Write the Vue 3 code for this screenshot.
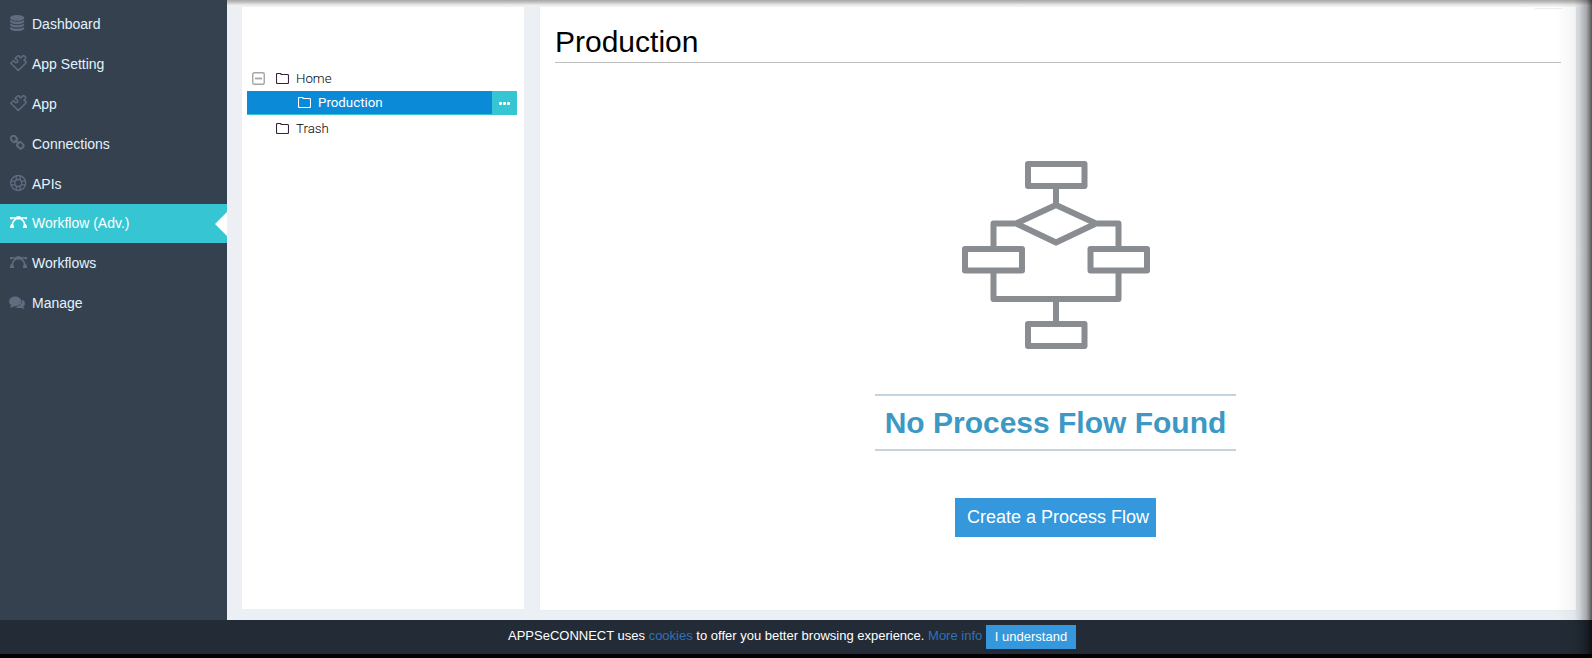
<script setup>
const items = [
  { label: 'Dashboard', icon: 'db' },
  { label: 'App Setting', icon: 'puzzle' },
  { label: 'App', icon: 'puzzle' },
  { label: 'Connections', icon: 'link' },
  { label: 'APIs', icon: 'ring', short: true },
  { label: 'Workflow (Adv.)', icon: 'vector', active: true },
  { label: 'Workflows', icon: 'vector' },
  { label: 'Manage', icon: 'chat' },
]
const folder = 'M.5 9.500V1.5Q.5.5 1.5.5H4.2Q5.2.5 5.2 1.500H11.500Q12.5 1.500 12.5 2.500V9.500Q12.5 10.500 11.5 10.500H1.5Q.5 10.500.5 9.500Z'
</script>

<template>
  <div class="page">
    <div class="body">
      <nav class="side">
        <a v-for="i in items" :key="i.label" class="item" :class="{ active: i.active, short: i.short }">
          <svg v-if="i.icon === 'db'" class="ico" width="18" height="18" viewBox="0 0 18 18">
            <ellipse cx="7.1" cy="2.9" rx="7.1" ry="2.9" fill="currentColor" />
            <g fill="currentColor">
              <path d="M0 5Q2.500 6.800 7.1 6.800T14.2 5V6.800Q12.800 9.200 7.1 9.200T0 6.800Z" />
              <path d="M0 8.500Q2.500 10.300 7.1 10.300T14.2 8.500V10.100Q12.800 12.600 7.1 12.600T0 10.100Z" />
              <path d="M0 11.900Q2.500 13.700 7.1 13.700T14.2 11.900V13.500Q12.800 16.100 7.1 16.100T0 13.500Z" />
            </g>
          </svg>
          <svg v-else-if="i.icon === 'puzzle'" class="ico" width="18" height="18" viewBox="0 0 18 18" fill="none" stroke="currentColor" stroke-width="1.4" stroke-linejoin="round">
            <path d="M8.300 15.500.8 8.200 3 6Q3.700 5.500 4.200 6.400Q5.200 8.400 7 7.400Q8.600 6 7 4.700Q4.800 4.200 5.200 3.200L7.400 1.200Q8.600.2 9.500 1.200Q9.600 3.300 11 2.600Q12.300.3 14.200.8Q16.400 1.900 15.300 3.900Q13.300 5 14.600 6Q17 6.600 15.700 8.200Z" />
          </svg>
          <svg v-else-if="i.icon === 'link'" class="ico" width="18" height="18" viewBox="0 0 18 18" fill="none" stroke="currentColor" stroke-width="1.9">
            <rect x="-3.1" y="-2.600" width="6.2" height="5.2" rx="1.9" transform="translate(3.900 3.900) rotate(45)" />
            <rect x="-3.1" y="-2.600" width="6.2" height="5.2" rx="1.9" transform="translate(10.300 10.300) rotate(45)" />
            <path d="M4.900 4.900 9 9" />
          </svg>
          <svg v-else-if="i.icon === 'ring'" class="ico" width="18" height="18" viewBox="0 0 18 18" fill="none" stroke="currentColor" stroke-width="1.3">
            <circle cx="8.2" cy="8" r="7.500" /><circle cx="8.2" cy="8" r="3.500" />
            <path d="M6.300.8V5M10.100.8V5M6.300 11V15.200M10.100 11V15.200M1 6.1H5.200M1 9.900H5.200M11.200 6.1H15.400M11.200 9.900H15.400" />
          </svg>
          <svg v-else-if="i.icon === 'vector'" class="ico vec" width="18" height="18" viewBox="0 0 18 18">
            <path d="M.5 2.1H16.500M2.200 9.500Q2.600 4.500 6.500 2.700M14.800 9.500Q14.400 4.500 10.500 2.700" fill="none" stroke="currentColor" stroke-width="1.500" />
            <path d="M6.500.2H10.500V3.500H6.500ZM0 1H2V3.300H0ZM15 1H17V3.300H15ZM1 8.200H3.300L4.200 12H0V10.500ZM13.700 8.200H16L17 10.500V12H12.800Z" fill="currentColor" />
          </svg>
          <svg v-else class="ico chat" width="18" height="18" viewBox="0 0 18 18" fill="currentColor">
            <ellipse cx="6.2" cy="5.400" rx="6.2" ry="4.900" />
            <path d="M2.400 8.500 1 11.600Q4 11.500 5.600 9.700Z" />
            <path d="M13.200 3.800Q16.200 5.400 15.900 8Q15.700 9.700 14.300 10.700Q14.500 12 15.900 12.800Q13.500 13 12.100 11.700Q8.400 12.400 5.900 10.900Q13 10.600 13.200 3.800Z" />
          </svg>
          <span>{{ i.label }}</span>
        </a>
      </nav>

      <main class="work">
        <section class="tree">
          <div class="row">
            <svg class="toggle" width="13" height="13" viewBox="0 0 13 13"><rect x=".75" y=".75" width="11.5" height="11.5" rx="1.5" fill="none" stroke="#a5a5a5" stroke-width="1.4" /><path d="M3 6.500H10" stroke="#a5a5a5" stroke-width="1.8" /></svg>
            <svg class="folder" width="13" height="11" viewBox="0 0 13 11"><path :d="folder" /></svg>
            <span class="light">Home</span>
          </div>
          <div class="row selected">
            <svg class="folder" width="13" height="11" viewBox="0 0 13 11"><path :d="folder" /></svg>
            <span>Production</span>
            <span class="more"><i /><i /><i /></span>
          </div>
          <div class="row trash">
            <svg class="folder" width="13" height="11" viewBox="0 0 13 11"><path :d="folder" /></svg>
            <span class="light">Trash</span>
          </div>
        </section>

        <section class="panel">
          <h1>Production</h1>
          <div class="empty">
            <svg class="flow" width="188" height="188" viewBox="0 0 188 188" fill="none" stroke="#898c90" stroke-width="6" stroke-linejoin="round">
              <rect x="66" y="3" width="56.5" height="22" />
              <rect x="3" y="88" width="57" height="21.5" />
              <rect x="128.500" y="88" width="56.5" height="21.5" />
              <rect x="66" y="163" width="56.500" height="22" />
              <path d="M94 25V44M54 62.500 94 44 134 62.500 94 81.500ZM54 62.500H31.500V88M134 62.500H156.500V88M31.500 109.500V138H156.500V109.500M94 138V163" />
            </svg>
            <h2>No Process Flow Found</h2>
            <button class="create">Create a Process Flow</button>
          </div>
        </section>
        <div class="shade-top"></div>
        <div class="hairline"></div>
      </main>
    </div>

    <footer class="cookie">
      <span class="msg">APPSeCONNECT uses <a>cookies</a> to offer you better browsing experience. <a>More info</a></span>
      <button class="ok">I understand</button>
    </footer>
    <div class="shade-right"></div>
  </div>
</template>

<style>
body { margin: 0; overflow: hidden; }
</style>

<style scoped>
* { box-sizing: border-box; }
.page { position: relative; width: 1592px; height: 658px; display: flex; flex-direction: column; overflow: hidden; background: #000; font-family: "Liberation Sans", Arial, sans-serif; }
.body { display: flex; height: 620px; }
.side { width: 227px; background: #364150; padding-top: 5px; flex: none; }
.item { position: relative; display: flex; height: 40px; padding: 9px 0 0 10px; color: #e0f4ff; font-size: 14px; line-height: 20px; white-space: nowrap; }
.item.short { height: 39px; }
.item span { width: max-content; }
.ico { flex: none; margin: 1px 4px 0 0; color: #606c80; }
.vec { margin-top: 3px; }
.chat { margin: 3px 5px 0 -1px; }
.active { height: 39px; margin-bottom: 1px; background: #36c6d3; color: #fff; }
.active .ico { color: #fff; }
.active::after { content: ""; position: absolute; right: 0; top: 8px; border: 12px solid transparent; border-left-width: 0; border-right-color: #fff; }
.work { position: relative; flex: 1; display: flex; gap: 15px; padding: 7px 15px 9px 15px; background: #ecf0f4; }
.tree { width: 282px; height: 602px; background: #fff; padding: 59px 7px 0 5px; font-family: Roboto, "Noto Sans", sans-serif; font-size: 13.3px; color: #222; }
.row { height: 24px; display: flex; align-items: center; padding-left: 5px; }
.toggle { margin-right: 11px; }
.folder { margin-right: 7px; fill: none; stroke: #33233c; stroke-width: 1.1; }
.selected { height: 24px; margin-top: 1px; padding-left: 51px; background: #0b8ad8; border-bottom: 1px solid #36c6d3; color: #fff; }
.selected .folder { stroke: #fff; }
.more { width: 25px; height: 24px; margin: 0 0 -1px auto; background: #36c6d3; display: flex; gap: 1px; align-items: center; justify-content: center; padding-right: 1px; }
.more i { width: 3px; height: 3px; border-radius: 1px; background: #fff; }
.trash { padding-left: 29px; margin-top: 1px; }
.light { font-weight: 300; color: #000; }
.panel { flex: 1; height: 604px; padding: 0 15px; background: #fff; border: 1px solid #e7ecf1; border-top: 0; }
h1 { height: 56px; margin: 0; padding-top: 15px; border-bottom: 1px solid #bfbfbf; font-size: 30px; line-height: 40px; font-weight: 400; color: #000; }
.empty { display: flex; flex-direction: column; align-items: center; padding: 98px 5px 0 0; }
.flow { display: block; }
h2 { width: 361px; height: 57px; margin: 45px 0 47px; border: solid #c5d3df; border-width: 2px 0; font-size: 30px; line-height: 53px; text-align: center; color: #3b99c3; white-space: nowrap; }
button { border: 0; color: #fff; background: #3598dc; font-family: inherit; padding: 0; white-space: nowrap; }
.create { width: 201px; height: 39px; padding: 0 0 1px 5px; font-size: 18px; }
.shade-top { position: absolute; inset: 0 0 auto 0; height: 7px; background: linear-gradient(#a6a6a6, #c4c4c4 35%, #eaeaea 70%, #f3f3f3); }
.hairline { position: absolute; right: 30px; top: 8px; width: 27px; height: 1px; background: #ededed; }
.cookie { height: 34px; background: #232b36; display: flex; align-items: flex-start; padding-left: 508px; font-size: 13px; color: #fff; }
.msg { line-height: 31px; width: 478px; white-space: nowrap; }
.msg a { color: #2f72b8; }
.ok { width: 90px; height: 24px; margin-top: 5px; padding-bottom: 2px; font-size: 13px; }
.shade-right { position: absolute; right: 0; top: 0; width: 36px; height: 654px; background: linear-gradient(to right, transparent, rgba(0,0,0,.04) 50%, rgba(0,0,0,.12) 65%, rgba(0,0,0,.3) 85%, rgba(0,0,0,.65)); }
</style>
